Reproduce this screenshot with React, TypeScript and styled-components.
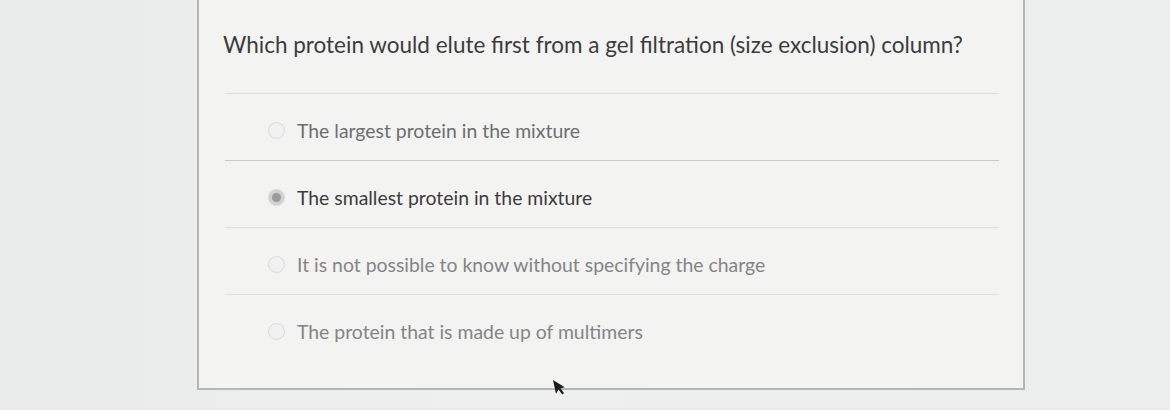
import React from "react";
import styled, { createGlobalStyle } from "styled-components";

const Global = createGlobalStyle`
  html, body { margin: 0; padding: 0; }
  body {
    background: #eaeceb;
    font-family: Lato, "Open Sans", sans-serif;
    width: 1170px;
    height: 410px;
    overflow: hidden;
  }
`;

const Page = styled.div`
  position: relative;
  width: 1170px;
  height: 410px;
  background: linear-gradient(90deg, #e9ebea 0%, #eef0ef 40%, #eceeed 100%);
`;

const Card = styled.section`
  box-sizing: border-box;
  margin-left: 197px;
  margin-top: -2px;
  width: 828px;
  height: 392px;
  background: #f3f3f2;
  border: 2px solid #b4b6b6;
  padding: 0 24px 0 26px;
`;

const Question = styled.h2`
  margin: 0;
  padding: 31px 0 0 0;
  height: 93px;
  box-sizing: border-box;
  font-size: 22.5px;
  line-height: 27px;
  font-weight: 400;
  color: #3c3c3e;
  margin-left: -2px;
`;

const Options = styled.ul`
  list-style: none;
  margin: 0;
  padding: 0;
`;

const Option = styled.li<{ $strong?: boolean }>`
  box-sizing: border-box;
  height: 67px;
  border-top: 1px solid ${(p) => (p.$strong ? "#c9cbcb" : "#dfe0e0")};
  display: flex;
  align-items: center;
  padding: 7px 0 0 43px;
  gap: 12px;
`;

const Radio = styled.span<{ $checked?: boolean }>`
  box-sizing: border-box;
  width: 17px;
  height: 17px;
  border-radius: 50%;
  border: 1px solid #d9dada;
  background: ${(p) => (p.$checked ? "#d0d1d1" : "#f1f1f1")};
  display: flex;
  align-items: center;
  justify-content: center;
  &::after {
    content: "";
    width: 9px;
    height: 9px;
    border-radius: 50%;
    background: ${(p) => (p.$checked ? "#9a9b9c" : "transparent")};
  }
`;

const Label = styled.span<{ $tone: string }>`
  font-size: 19.4px;
  line-height: 22px;
  color: ${(p) => p.$tone};
`;

const Cursor = styled.svg`
  position: absolute;
  left: 550px;
  top: 381px;
`;

const options = [
  { text: "The largest protein in the mixture", tone: "#6e6e70", checked: false, strong: false },
  { text: "The smallest protein in the mixture", tone: "#3c3c3e", checked: true, strong: true },
  { text: "It is not possible to know without specifying the charge", tone: "#858587", checked: false, strong: false },
  { text: "The protein that is made up of multimers", tone: "#858587", checked: false, strong: false },
];

export default function App() {
  return (
    <Page>
      <Global />
      <Card>
        <Question>Which protein would elute first from a gel filtration (size exclusion) column?</Question>
        <Options>
          {options.map((o) => (
            <Option key={o.text} $strong={o.strong}>
              <Radio $checked={o.checked} />
              <Label $tone={o.tone}>{o.text}</Label>
            </Option>
          ))}
        </Options>
      </Card>
      <Cursor width="16" height="22" viewBox="0 0 16 22">
        <g transform="rotate(-12 3 1)">
          <path d="M3 1 L3 15 L6.5 11.5 L9 17 L11 16 L8.6 10.6 L13 10.6 Z" fill="#1d1d1f" />
        </g>
      </Cursor>
    </Page>
  );
}
